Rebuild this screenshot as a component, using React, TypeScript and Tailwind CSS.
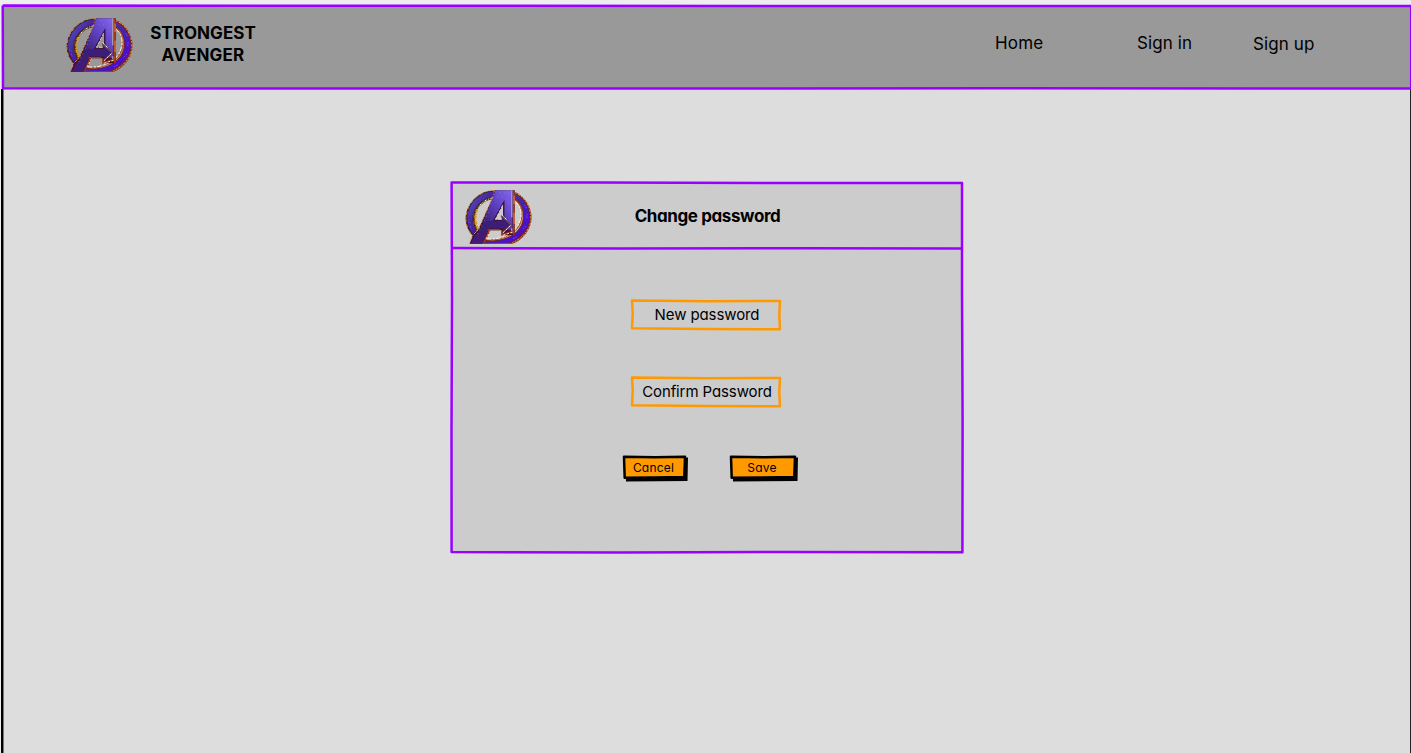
import React from "react";

const Logo = () => (
  <svg viewBox="33 27 202 165" className="h-[55px] w-[67px] shrink-0" aria-hidden="true">
    <defs>
      <linearGradient id="metal" x1="0" y1="1" x2="1" y2="0">
        <stop offset="0" stopColor="#4a1580" />
        <stop offset=".35" stopColor="#38206f" />
        <stop offset=".65" stopColor="#5b3fc0" />
        <stop offset="1" stopColor="#8668ee" />
      </linearGradient>
      <linearGradient id="rim" x1="0" y1="0" x2="1" y2="1">
        <stop offset="0" stopColor="#5a55d0" />
        <stop offset=".45" stopColor="#45289a" />
        <stop offset=".75" stopColor="#4a10d0" />
        <stop offset="1" stopColor="#4c1070" />
      </linearGradient>
      <clipPath id="crop"><rect x="33" y="30" width="202" height="162" /></clipPath>
    </defs>
    <g clipPath="url(#crop)" fill="none">
      <path d="M126 31C78 27 35 69 35 117Q36 149 58 169L68 151C55 134 55 112 61 97C70 74 89 61 115 54Z" fill="#3a1c30" />
      <path d="M124 35C80 32 40 70 40 117Q41 145 58 163L66 150C53 132 54 108 60 94C70 71 88 57 116 50Z" fill="url(#rim)" />
      <path d="M124 31C78 29 36 69 36 117Q37 149 57 168" stroke="#cf8a40" strokeWidth="3" strokeDasharray="11 5 4 3 7 8" />
      <path d="M117 54C80 59 60 89 60 117Q60 137 69 150" stroke="#4a2a12" strokeWidth="6" />
      <path d="M118 53C85 59 67 83 65 107" stroke="#fff0c8" strokeWidth="3" strokeDasharray="8 4 3 5" />
      <path d="M70 88Q57 120 72 147" stroke="#d9930f" strokeWidth="7" strokeDasharray="9 4 4 2" />
      <path d="M183 35C216 50 235 84 234 115C232 156 198 188 169 194H89L93 178C144 190 202 163 207 116C210 90 199 70 183 61Z" fill="#7c2412" />
      <path d="M183 42C211 54 229 84 228 115C226 151 193 181 165 189L91 191L94 183C150 190 207 162 210 116C213 88 201 68 183 56Z" fill="url(#rim)" />
      <path d="M184 61C214 81 209 126 187 149C164 175 124 184 94 178" stroke="#b5562f" strokeWidth="4" />
      <path d="M184 64C211 84 205 126 183 150C162 171 130 180 97 177" stroke="#fff6ec" strokeWidth="3" strokeDasharray="14 3 7 5" />
      <path d="M184 38C215 50 233 84 232 117C231 149 203 178 176 188" stroke="#ffb870" strokeWidth="2.5" strokeDasharray="5 4 8 3" />
      <path fillRule="evenodd" d="M122 28H183V166H143V151H111L89 193H46L57 164L72 151L115 55ZM148 72L122 119H148Z" fill="#481026" />
      <path fillRule="evenodd" d="M126 28H176V152L149 145H105L84 193H50L62 168L76 155ZM150 65L118 123H151Z" fill="url(#metal)" />
      <path d="M122 30L115 55L73 150L57 165L47 190" stroke="#d9955f" strokeWidth="3" strokeDasharray="7 4 3 6" />
      <path d="M150 67L120 121H150Z" stroke="#3b1540" strokeWidth="4" />
      <path d="M147 75L125 118H147" stroke="#f3d8c8" strokeWidth="2.5" strokeDasharray="10 4" />
      <path d="M99 123H146L141 105L172 133L146 158L149 145H90Z" fill="#3b1e78" />
      <path d="M142 107L172 134L147 159" stroke="#7a4a40" strokeWidth="4" />
      <path d="M144 104L160 121M170 137L147 159" stroke="#fff0e2" strokeWidth="3" strokeDasharray="8 4" />
      <path d="M174 30V112M174 145V160" stroke="#a99db8" strokeWidth="4" />
      <path d="M180 30V166" stroke="#a43c18" strokeWidth="5" />
      <path d="M181 46V72M181 98V132" stroke="#ff9048" strokeWidth="2.5" />
      <path d="M177 154L144 165V151M106 151L89 190M101 149H138" stroke="#a83b22" strokeWidth="4" />
      <path d="M176 157L147 166M110 152L95 180" stroke="#ffdca8" strokeWidth="3" strokeDasharray="7 4" />
      <path d="M138 38L169 39M131 50L154 51M158 58L168 79M104 96L91 122M84 137L67 170" stroke="#a078e8" strokeWidth="4" strokeDasharray="3 10" opacity=".5" />
      <path d="M43 126l7 4M49 139l3 7M213 76l5 8M220 103l-1 13M209 146l7-7M179 176l10-5" stroke="#9465f0" strokeWidth="3" strokeDasharray="3 4" />
    </g>
  </svg>
);

const HeaderFrame = () => (
  <svg className="pointer-events-none absolute inset-0 h-full w-full" viewBox="0 0 1411 86" fill="none" aria-hidden="true">
    <path d="M2.7 1.6L300 1.7L900 2L1411 2M1410.7 2V84M2.7 1.6L3 84.2L500 84.6L1000 84.2L1411 84.5" stroke="#9900ff" strokeWidth="2.5" strokeLinejoin="round" />
  </svg>
);

const CardFrame = () => (
  <svg className="pointer-events-none absolute inset-0 h-full w-full" viewBox="0 0 514 373" fill="none" aria-hidden="true">
    <path d="M1.6 1.5L150 1.6L350 2L512 2L512 110L512.6 240L512.4 371.3L330 371L170 371.4L1.6 371L1.5 250L2 120Z" stroke="#9900ff" strokeWidth="2.5" strokeLinejoin="round" />
    <path d="M2 67L170 67.4L350 67.2L512 67.4" stroke="#9900ff" strokeWidth="2.5" />
  </svg>
);

const Field = ({ label }: { label: string }) => (
  <div className="relative flex h-[32px] w-[152px] items-center justify-center pl-[2px]">
    <svg className="absolute inset-0" width="152" height="32" fill="none" aria-hidden="true">
      <path d="M2 1.5L76 2.3L150 2L149.3 16L150 30.3L75 30L2 29.2L2.7 14Z" stroke="#ff9900" strokeWidth="2.5" strokeLinejoin="round" />
    </svg>
    <span className="relative whitespace-nowrap text-[15px] leading-5 tracking-[-0.1px]">{label}</span>
  </div>
);

const SketchButton = ({ label, wide }: { label: string; wide?: boolean }) => (
  <button className={`relative flex h-[27px] justify-center pt-[5px] pr-[3px] ${wide ? "w-[69px]" : "w-[66px]"}`}>
    <svg className="absolute inset-0 h-full w-full" viewBox={wide ? "0 0 69 27" : "0 0 66 27"} aria-hidden="true">
      {wide ? (
        <>
          <path d="M4 4L69 2.5L68.5 26L4 26.5Z" fill="#000" />
          <path d="M2 1.8L35 2.2L66 1.8L65.3 22L34 22.5L2.7 22.7Z" fill="#ff9900" stroke="#000" strokeWidth="2.5" strokeLinejoin="round" />
        </>
      ) : (
        <>
          <path d="M4 4L66 2.5L65.5 26L4 26.5Z" fill="#000" />
          <path d="M2 1.8L33 2.2L63 1.8L62.3 22L32 22.5L2.7 22.7Z" fill="#ff9900" stroke="#000" strokeWidth="2.5" strokeLinejoin="round" />
        </>
      )}
    </svg>
    <span className="relative text-[12px] leading-[15px] tracking-[0.2px]">{label}</span>
  </button>
);

export default function App() {
  return (
    <div className="flex h-[753px] w-full flex-col overflow-hidden bg-[#eeeeee] pt-1 font-['Inter','Open_Sans',sans-serif] text-black [font-feature-settings:'cv11'_1,'ss03'_1]">
      <header className="relative flex h-[85px] shrink-0 pl-[66px] pt-[13px]">
        <div className="absolute inset-x-[2px] bottom-[1px] top-[2px] bg-[#999999]" />
        <div className="pointer-events-none absolute inset-x-0 top-0 z-10 h-[86px]"><HeaderFrame /></div>
        <div className="relative"><Logo /></div>
        <div className="relative ml-[15px] mt-[5px] w-[110px] whitespace-nowrap text-center text-[17px] font-bold leading-[22px]">
          <div className="tracking-[0.05px]">STRONGEST</div>
          <div className="tracking-[0.2px]">AVENGER</div>
        </div>
        <nav className="relative ml-auto mr-[96px] mt-[14px] flex text-[17px] leading-6">
          <a className="w-[142px] tracking-[0.2px]">Home</a>
          <a className="w-[116px] tracking-[0.1px]">Sign in</a>
          <a className="w-[62px] whitespace-nowrap pt-px tracking-[0.1px]">Sign up</a>
        </nav>
      </header>
      <div className="flex flex-1 pl-px">
        <div className="w-[2px] bg-black" />
        <main className="flex flex-1 items-start border-l border-r border-l-[#777777] border-r-[#222222] bg-[#dddddd] pl-[446px] pt-[92px]">
          <section className="relative h-[373px] w-[514px]">
            <div className="absolute inset-[2px] bg-[#cccccc]" />
            <CardFrame />
            <div className="relative flex h-[67px] pl-[15px] pt-[8px]">
              <Logo />
              <h1 className="ml-[100px] mt-[15px] w-[151px] whitespace-nowrap text-center text-[17px] font-bold leading-6 tracking-[-0.4px]">Change password</h1>
            </div>
            <div className="flex flex-col items-start pl-[180px] pt-[51px]">
              <Field label="New password" />
              <div className="h-[45px]" />
              <Field label="Confirm Password" />
            </div>
            <div className="mt-[47px] flex gap-[41px] pl-[172px]">
              <SketchButton label="Cancel" />
              <SketchButton label="Save" wide />
            </div>
          </section>
        </main>
      </div>
    </div>
  );
}
